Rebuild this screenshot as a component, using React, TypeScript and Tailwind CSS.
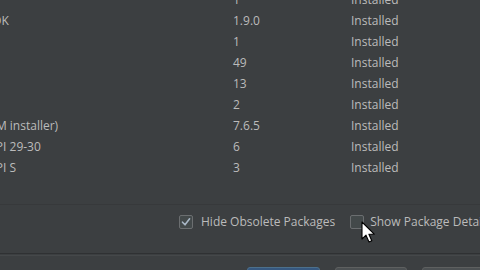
import React from 'react';

type Row = { name: string; version: string; status: string };

const rows: Row[] = [
  { name: 'Google Play Licensing Library', version: '1', status: 'Installed' },
  { name: 'Google Play Instant Development SDK', version: '1.9.0', status: 'Installed' },
  { name: 'Google Play APK Expansion library', version: '1', status: 'Installed' },
  { name: 'Google Play services', version: '49', status: 'Installed' },
  { name: 'Google USB Driver', version: '13', status: 'Installed' },
  { name: 'Google Web Driver', version: '2', status: 'Installed' },
  { name: 'Intel x86 Emulator Accelerator (HAXM installer)', version: '7.6.5', status: 'Installed' },
  { name: 'Layout Inspector image server for API 29-30', version: '6', status: 'Installed' },
  { name: 'Layout Inspector image server for API S', version: '3', status: 'Installed' },
];

const Checkbox = ({ checked }: { checked: boolean }) => (
  <span className="w-[14px] h-[14px] shrink-0 rounded-[2px] border border-[#6b6e70] bg-[#43494a] flex items-center justify-center">
    {checked && (
      <svg width="10" height="10" viewBox="0 0 10 10" fill="none">
        <path d="M1.5 5.2 L4 7.8 L8.6 1.8" stroke="#a9b7c6" strokeWidth="1.6" strokeLinecap="round" strokeLinejoin="round" />
      </svg>
    )}
  </span>
);

const Cursor = () => (
  <svg className="absolute left-[361px] top-[221px]" width="16" height="23" viewBox="0 0 16 23">
    <path d="M1 1 L1 18 L5 14.2 L8 21 L10.8 19.8 L7.9 13.2 L13.2 13.2 Z" fill="#ffffff" stroke="#000000" strokeWidth="1.1" strokeLinejoin="round" />
  </svg>
);

export default function App() {
  return (
    <div
      className="relative w-[480px] h-[270px] overflow-hidden bg-[#3c3f41] text-[#bbbbbb] text-[12px] flex flex-col"
      style={{ fontFamily: '"Open Sans", "Noto Sans", sans-serif' }}
    >
      <div className="h-[205px] shrink-0 border-b border-[#37393b] overflow-hidden">
        <div className="mt-[-11px]">
          {rows.map((r, i) => (
            <div key={i} className="h-[21px] flex items-center whitespace-nowrap">
              <div className="w-[436px] ml-[-203px] shrink-0 overflow-hidden">{r.name}</div>
              <div className="w-[118px] shrink-0">{r.version}</div>
              <div className="flex-1">{r.status}</div>
            </div>
          ))}
        </div>
      </div>

      <div className="h-[34px] shrink-0 flex items-center whitespace-nowrap">
        <div className="ml-[179px] flex items-center gap-[8px]">
          <Checkbox checked />
          <span>Hide Obsolete Packages</span>
        </div>
        <div className="ml-[15px] flex items-center gap-[6px]">
          <Checkbox checked={false} />
          <span>Show Package Details</span>
        </div>
      </div>

      <div className="mt-[14px] h-[3px] shrink-0 border-t border-[#2f3133] border-b border-b-[#45484a]" />

      <div className="mt-[11px] shrink-0 flex gap-[15px] pl-[247px]">
        <div className="w-[73px] h-[24px] rounded-[3px] bg-[#365880] border border-[#4c708c] shrink-0" />
        <div className="w-[72px] h-[24px] rounded-[3px] bg-[#4c5052] border border-[#5e6060] shrink-0" />
        <div className="w-[72px] h-[24px] rounded-[3px] bg-[#4c5052] border border-[#5e6060] shrink-0" />
      </div>

      <Cursor />
    </div>
  );
}
